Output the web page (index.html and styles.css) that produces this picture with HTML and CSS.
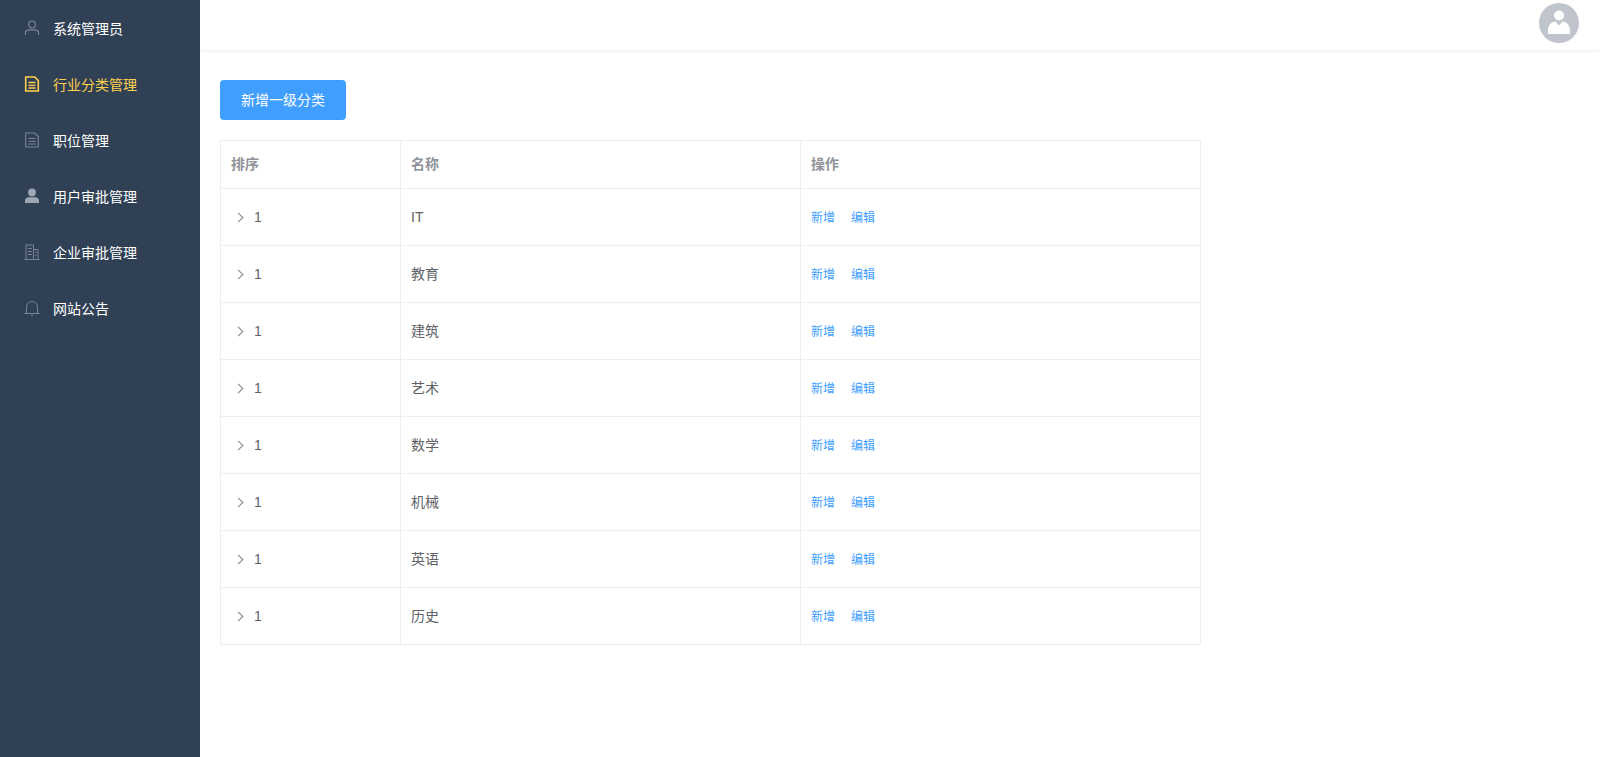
FILE: index.html
```html
<!DOCTYPE html>
<html lang="zh-CN">

<head>
    <meta charset="UTF-8">
    <title>行业分类管理</title>
    <link rel="stylesheet" href="styles.css">
</head>

<body>
    <div class="app">
        <ul class="menu">
            <li class="menu_item">
                <svg class="menu_icon" viewBox="0 0 16 16"><circle cx="8" cy="4.6" r="3.4" fill="none" stroke="currentColor" stroke-width="1.2"/><path d="M1.4 15v-1.6c0-2.2 1.8-3.6 3.8-3.6h5.600c2 0 3.800 1.400 3.800 3.600V15" fill="none" stroke="currentColor" stroke-width="1.2"/></svg>
                <span>系统管理员</span>
            </li>
            <li class="menu_item active">
                <svg class="menu_icon" viewBox="0 0 16 16"><path d="M1.7 1h9l3.6 3.6V15H1.7z" fill="none" stroke="currentColor" stroke-width="1.6"/><path d="M4.500 6.500h7M4.500 9.300h7M4.500 12h7" stroke="currentColor" stroke-width="1.3"/></svg>
                <span>行业分类管理</span>
            </li>
            <li class="menu_item">
                <svg class="menu_icon" viewBox="0 0 16 16"><path d="M1.7 1h9l3.6 3.6V15H1.7z" fill="none" stroke="currentColor" stroke-width="1.1"/><path d="M4.500 6.500h7M4.500 9.300h7M4.500 12h7" stroke="currentColor" stroke-width="1"/></svg>
                <span>职位管理</span>
            </li>
            <li class="menu_item">
                <svg class="menu_icon solid" viewBox="0 0 16 16"><circle cx="8" cy="4.400" r="3.900" fill="currentColor"/><path d="M1 15v-2.200C1 10.400 3 9.300 5 9.300h6c2 0 4 1.100 4 3.500V15z" fill="currentColor"/></svg>
                <span>用户审批管理</span>
            </li>
            <li class="menu_item">
                <svg class="menu_icon" viewBox="0 0 16 16"><path d="M0.500 15.500h15M2 15.500V1h7.500v14.500M9.500 5.500h4.500v10" fill="none" stroke="currentColor" stroke-width="1"/><path d="M3.800 4.500h4M3.800 7.500h4M3.800 10.500h4M11 8.500h1.500M11 11.500h1.500" stroke="currentColor" stroke-width="1"/></svg>
                <span>企业审批管理</span>
            </li>
            <li class="menu_item">
                <svg class="menu_icon" viewBox="0 0 16 16"><path d="M0.500 13.500h15M2.500 13.500V7a5.500 5.500 0 0 1 11 0v6.500" fill="none" stroke="currentColor" stroke-width="1"/><path d="M7 15.500h2" stroke="currentColor" stroke-width="1"/></svg>
                <span>网站公告</span>
            </li>
        </ul>

        <div class="main">
            <div class="navbar">
                <svg class="avatar" viewBox="0 0 40 40">
                    <circle cx="20" cy="20" r="20" fill="#c0c4cc"/>
                    <circle cx="20" cy="12.500" r="5" fill="#fff"/>
                    <path d="M9 31v-4c0-5 3.500-8 7.500-8.500l3.500 4 3.500-4c4 .5 7.500 3.500 7.500 8.500v4z" fill="#fff"/>
                </svg>
            </div>
            <div class="content">
                <button class="add_btn">新增一级分类</button>
                <table class="cate_table">
                    <thead>
                        <tr>
                            <th class="col_sort">排序</th>
                            <th class="col_name">名称</th>
                            <th>操作</th>
                        </tr>
                    </thead>
                    <tbody>
                        <tr>
                            <td class="latin"><span class="arrow"></span>1</td>
                            <td class="latin">IT</td>
                            <td><a href="#">新增</a><a href="#">编辑</a></td>
                        </tr>
                        <tr>
                            <td class="latin"><span class="arrow"></span>1</td>
                            <td>教育</td>
                            <td><a href="#">新增</a><a href="#">编辑</a></td>
                        </tr>
                        <tr>
                            <td class="latin"><span class="arrow"></span>1</td>
                            <td>建筑</td>
                            <td><a href="#">新增</a><a href="#">编辑</a></td>
                        </tr>
                        <tr>
                            <td class="latin"><span class="arrow"></span>1</td>
                            <td>艺术</td>
                            <td><a href="#">新增</a><a href="#">编辑</a></td>
                        </tr>
                        <tr>
                            <td class="latin"><span class="arrow"></span>1</td>
                            <td>数学</td>
                            <td><a href="#">新增</a><a href="#">编辑</a></td>
                        </tr>
                        <tr>
                            <td class="latin"><span class="arrow"></span>1</td>
                            <td>机械</td>
                            <td><a href="#">新增</a><a href="#">编辑</a></td>
                        </tr>
                        <tr>
                            <td class="latin"><span class="arrow"></span>1</td>
                            <td>英语</td>
                            <td><a href="#">新增</a><a href="#">编辑</a></td>
                        </tr>
                        <tr>
                            <td class="latin"><span class="arrow"></span>1</td>
                            <td>历史</td>
                            <td><a href="#">新增</a><a href="#">编辑</a></td>
                        </tr>
                    </tbody>
                </table>
            </div>
        </div>
    </div>
</body>

</html>
```

FILE: styles.css
```css
html,
body {
    width: 100%;
    height: 100%;
    margin: 0;
    padding: 0;
    overflow: hidden;
    font-family: "Liberation Sans", "Noto Sans CJK SC", sans-serif;
    font-size: 14px;
    color: #606266;
}

ul {
    margin: 0;
    padding: 0;
    list-style: none;
}

.app {
    display: flex;
    height: 100%;
}

.menu {
    width: 200px;
    flex: none;
    background: #304156;
}

.menu_item {
    height: 56px;
    padding-left: 24px;
    display: flex;
    align-items: center;
    color: #fff;
}

.menu_item.active {
    color: #ffd04b;
}

.menu_icon {
    width: 16px;
    height: 16px;
    margin-right: 13px;
    color: #788595;
}

.menu_icon.solid {
    color: #a0a8b4;
}

.menu_item.active .menu_icon {
    color: #ffd04b;
}

.main {
    flex: 1;
}

.navbar {
    height: 50px;
    display: flex;
    justify-content: flex-end;
    box-shadow: 0 1px 4px rgba(0, 21, 41, .08);
}

.avatar {
    width: 40px;
    height: 40px;
    margin: 3px 21px 0 0;
}

.content {
    padding: 30px 20px;
}

.add_btn {
    display: block;
    width: 126px;
    height: 40px;
    padding: 0 0 2px;
    border: 0;
    border-radius: 4px;
    background: #409eff;
    color: #fff;
    font: inherit;
}

.cate_table {
    width: 981px;
    margin-top: 20px;
    border-collapse: collapse;
    table-layout: fixed;
}

.cate_table th,
.cate_table td {
    border: 1px solid #ebeef5;
    padding: 0 10px 2px;
    text-align: left;
}

.cate_table th {
    height: 44px;
    padding-bottom: 3px;
    color: #909399;
}

.cate_table td {
    height: 54px;
}

.cate_table td.latin {
    padding-bottom: 0;
}

.col_sort {
    width: 159px;
}

.col_name {
    width: 379px;
}

.arrow {
    display: inline-block;
    width: 6px;
    height: 6px;
    margin: 0 12px 1px 4px;
    border-top: 1px solid #808388;
    border-right: 1px solid #808388;
    transform: rotate(45deg);
}

.cate_table a {
    margin-right: 16px;
    color: #409eff;
    font-size: 12px;
    text-decoration: none;
}
```
